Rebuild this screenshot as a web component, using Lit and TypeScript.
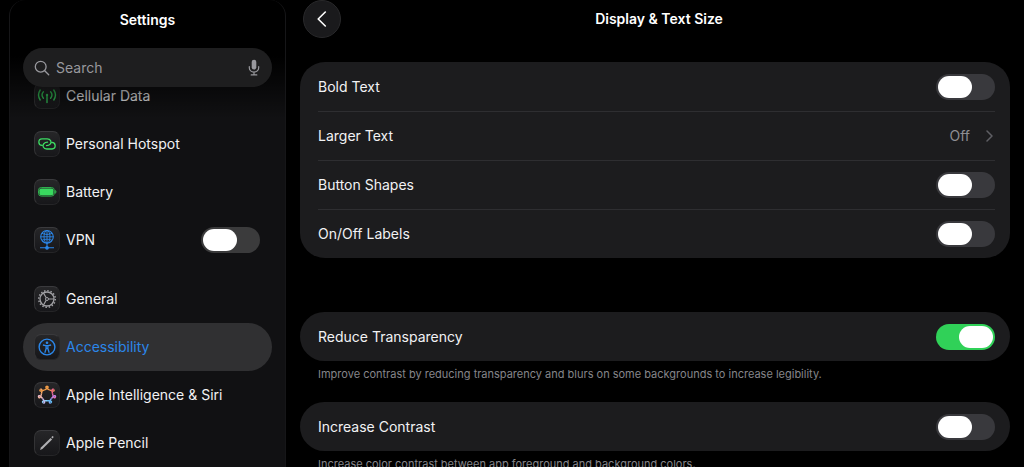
import { LitElement, html, svg, css, nothing } from "lit";
import { customElement, property, state } from "lit/decorators.js";
import { classMap } from "lit/directives/class-map.js";

const RING_COLORS = [
  "#f6a04a", "#f98a5a", "#f4698a", "#ec6fb4", "#c583e6", "#7fa8f5", "#62bdf7",
  "#8fd0f7", "#c3b9ee", "#f0bccb", "#f6b59c", "#f7a866", "#f7a04a", "#f6a04a",
];

/** Seven-lobed looping ring, split in short strokes so that the hue can travel round it. */
function loopRing() {
  const steps = 168;
  const at = (i: number) => {
    const t = (i / steps) * Math.PI * 2;
    const r = 7.2 + 1.5 * Math.cos(7 * t);
    const a = t - 0.33 * Math.sin(7 * t) - Math.PI / 2;
    return [13 + r * Math.cos(a), 13 + r * Math.sin(a)];
  };
  const parts = RING_COLORS.length;
  const size = steps / parts;
  return RING_COLORS.map((color, n) => {
    const points: string[] = [];
    for (let i = n * size; i <= (n + 1) * size; i++) {
      points.push(at(i).map((v) => v.toFixed(2)).join(" "));
    }
    return svg`<path d="M${points.join("L")}" stroke=${color} stroke-width="1.4"/>`;
  });
}

const ICONS: Record<string, unknown> = {
  cellular: svg`<g stroke="#34c759" stroke-width="1.4" stroke-linecap="round">
    <path d="M9.4 8.800a4.900 4.900 0 0 0 0 6.400M16.600 8.800a4.900 4.900 0 0 1 0 6.400M6.200 7a9 9 0 0 0 0 10M19.800 7a9 9 0 0 1 0 10M13 12.500V19.500"/>
    <circle cx="13" cy="12" r="1.200" fill="#34c759" stroke="none"/></g>`,
  hotspot: svg`<g stroke="#3ddc63" stroke-width="1.3" stroke-linecap="round">
    <path d="M8.300 14.400a3.300 3.300 0 0 1-.300-6.600h5.200c3.600 0 4.700 3.400 3 5.300-.8.900-2.200 1.500-3.700 1.500"/>
    <path d="M17.700 11.400a3.300 3.300 0 0 1 .300 6.600h-5.200c-3.600 0-4.700-3.400-3-5.300.8-.900 2.200-1.500 3.700-1.500"/></g>`,
  battery: svg`<rect x="4.500" y="8.500" width="15.800" height="8.600" rx="2.800" stroke="#2fae4d" stroke-width="1"/>
    <rect x="5.400" y="9.400" width="14" height="6.800" rx="1.900" fill="#39d95f"/>
    <path d="M21.300 11.200c1.200.500 1.200 2.700 0 3.200z" fill="#2fae4d" stroke="#2fae4d" stroke-width=".6"/>`,
  vpn: svg`<g stroke="#2b87ea" stroke-width="1.100">
    <circle cx="13" cy="9.800" r="6.300"/><ellipse cx="13" cy="9.800" rx="3" ry="6.300" stroke-width=".9"/>
    <path stroke-width=".9" d="M13 3.500v13M6.700 9.800h12.600M8 6.300c3 1.500 7 1.500 10 0M8 13.300c3-1.500 7-1.500 10 0"/>
    <path d="M13 16v4.800M6 20.800h14"/>
    <circle cx="13" cy="20.800" r="1.300" fill="#2b87ea"/></g>`,
  general: svg`<g stroke="#a0a0a4">
    <circle cx="13" cy="13" r="8.300" stroke-width="1.500" stroke-dasharray="1.500 1.759"/>
    <circle cx="13" cy="13" r="7" stroke-width="1.300"/>
    <circle cx="13" cy="13" r="1.500" stroke-width="1"/>
    <path stroke-width="1.200" d="M14.500 13H20M12.200 11.700 9.500 7M12.200 14.300 9.500 19"/></g>`,
  accessibility: svg`<g stroke="#2b87ea">
    <circle cx="13" cy="13" r="7.900" stroke-width="1.400"/>
    <circle cx="13" cy="8.700" r="1.300" fill="#2b87ea" stroke="none"/>
    <path stroke-width="1.300" stroke-linejoin="round" d="M8.900 11l3 .700h2.200l3-.700M12.100 11.800v3l-1.300 4M13.900 11.800v3l1.300 4M12.200 14.300h1.600"/></g>`,
  siri: loopRing(),
  pencil: svg`<path d="M6 19.900l.900-2.300L16.600 7.900l1.500 1.500-9.700 9.700z" fill="#b0b0b3"/>
    <path d="M17.300 7.200l.900-.900q.600-.400 1.100.100t.100 1.100l-.900.900z" fill="#b0b0b3"/>`,
};

@customElement("settings-switch")
class SettingsSwitch extends LitElement {
  @property({ type: Boolean }) checked = false;
  @property() name = "";

  static styles = css`
    :host { display: block; flex: none; height: 26px; }
    .switch {
      appearance: none; display: flex; align-items: center; box-sizing: border-box;
      width: 59px; height: 26px; margin: 0; padding: 0 2px;
      border-radius: 13px; background: var(--track, #39393d); cursor: pointer;
    }
    .switch::before { content: ""; width: 34px; height: 22px; border-radius: 11px; background: #fff; }
    .switch:checked { justify-content: flex-end; background: #30d158; }
    .switch:focus-visible { outline: 2px solid #2b87ea; outline-offset: 2px; }
  `;

  render() {
    return html`<input class="switch" type="checkbox" role="switch" aria-label=${this.name}
      .checked=${this.checked}
      @change=${(e: Event) => (this.checked = (e.target as HTMLInputElement).checked)} />`;
  }
}

interface Item { id: string; label: string; toggle?: boolean }

const GROUPS: Item[][] = [
  [
    { id: "cellular", label: "Cellular Data" },
    { id: "hotspot", label: "Personal Hotspot" },
    { id: "battery", label: "Battery" },
    { id: "vpn", label: "VPN", toggle: true },
  ],
  [
    { id: "general", label: "General" },
    { id: "accessibility", label: "Accessibility" },
    { id: "siri", label: "Apple Intelligence & Siri" },
    { id: "pencil", label: "Apple Pencil" },
  ],
];

@customElement("settings-sidebar")
class SettingsSidebar extends LitElement {
  @state() private current = "accessibility";

  static styles = css`
    :host {
      display: grid; grid-template-columns: minmax(0, 1fr); overflow: hidden; background: #111113;
      border: 1px solid #161618; border-width: 0 1px; border-radius: 16px 16px 0 0;
    }
    .header, .list { grid-area: 1 / 1; }
    .header {
      z-index: 1; align-self: start; padding: 10px 13px 32px; pointer-events: none;
      background: linear-gradient(#000 56px, #0000);
    }
    .title { margin: 0 0 18px; color: #fff; font-size: 14px; line-height: 20px; font-weight: 600; text-align: center; }
    .search {
      display: flex; align-items: center; gap: 6px; height: 39px; padding: 0 12px 0 11px;
      border-radius: 20px; background: #1e1e1f; color: #98989d; pointer-events: auto;
    }
    .input {
      flex: 1; min-width: 0; padding: 0; border: 0; outline: 0; background: none;
      color: #fff; font: inherit;
    }
    .input::placeholder { color: #98989d; opacity: 1; }
    .mic { display: flex; padding: 0; border: 0; background: none; color: inherit; }
    .list { display: flex; flex-direction: column; gap: 11px; padding: 72px 13px 0; }
    .item {
      display: flex; align-items: center; gap: 6px; height: 48px; padding: 0 12px 0 11px;
      border-radius: 24px; color: #f2f2f4; text-decoration: none; white-space: nowrap;
    }
    .item.current { background: #303032; color: #2b87ea; }
    .name { flex: 1; }
    .tile {
      flex: none; box-sizing: border-box; width: 26px; height: 26px; border-radius: 7px;
      border: 1px solid; border-color: #3a3a3d #262628 #252527 #333335;
      background: linear-gradient(#262628, #17171a);
    }
    .glyph { display: block; width: 26px; height: 26px; margin: -1px; }
    settings-switch { --track: #3b3b3c; }
  `;

  private item(it: Item) {
    const tile = html`<span class="tile"><svg class="glyph" viewBox="0 0 26 26" fill="none" aria-hidden="true">${ICONS[it.id]}</svg></span>
      <span class="name">${it.label}</span>`;
    if (it.toggle) {
      return html`<div class="item">${tile}<settings-switch name=${it.label}></settings-switch></div>`;
    }
    const on = it.id === this.current;
    return html`<a class=${classMap({ item: true, current: on })} href="#${it.id}"
      aria-current=${on ? "page" : nothing} @click=${() => (this.current = it.id)}>${tile}</a>`;
  }

  render() {
    return html`
      <header class="header">
        <h2 class="title">Settings</h2>
        <label class="search">
          <svg width="16" height="16" viewBox="0 0 16 16" fill="none" stroke="currentColor" stroke-width="1.300" stroke-linecap="round" aria-hidden="true">
            <circle cx="6.700" cy="6.700" r="5.400"/><path d="M10.700 10.700l4 4"/></svg>
          <input class="input" type="text" placeholder="Search" aria-label="Search" />
          <button class="mic" aria-label="Dictate">
            <svg width="12" height="17" viewBox="0 0 12 17" fill="none" stroke="currentColor" stroke-width="1.200" stroke-linecap="round" aria-hidden="true">
              <rect x="3.700" y=".800" width="4.600" height="9.800" rx="2.300" fill="currentColor" stroke="none"/>
              <path d="M1.300 7.500v1.300a4.700 4.300 0 0 0 9.400 0V7.500M6 13.200v2.500M3.200 15.900h5.600"/></svg>
          </button>
        </label>
      </header>
      <nav class="list">${GROUPS.map((g) => html`<div>${g.map((it) => this.item(it))}</div>`)}</nav>`;
  }
}

@customElement("app-root")
class AppRoot extends LitElement {
  static styles = css`
    :host {
      display: grid; grid-template-columns: minmax(0, 277px) minmax(0, 1fr); gap: 14px;
      box-sizing: border-box; height: 100vh; overflow: hidden; padding: 0 14px 0 9px;
      background: #000; color: #f2f2f4; font: 14px/20px Inter, "Liberation Sans", sans-serif;
    }
    .bar { display: grid; grid-template-columns: 38px 1fr 30px; align-items: center; padding: 0 3px 24px; }
    .back {
      display: grid; place-items: center; width: 38px; height: 38px; padding: 0;
      border: 1px solid #29292b; border-radius: 50%; background: #1a1a1c; color: #fff;
    }
    .title { margin: 0; font-size: 14px; line-height: 20px; font-weight: 600; text-align: center; color: #fff; }
    .card { padding: 0 15px 0 18px; border-radius: 25px; background: #1c1c1e; }
    .card.first { margin-bottom: 54px; }
    .row {
      display: flex; align-items: center; justify-content: space-between; box-sizing: border-box;
      height: 49px; color: inherit; text-decoration: none;
    }
    .row + .row { border-top: 1px solid #2e2e31; }
    .value { display: flex; align-items: center; gap: 16px; padding-right: 2px; color: #8e8e93; }
    .chevron { color: #5f5f64; }
    .note { margin: 5px 18px 19px; font-size: 11px; line-height: 17px; color: #85858a; }
  `;

  private toggle(name: string, on = false) {
    return html`<div class="row"><span>${name}</span><settings-switch name=${name} ?checked=${on}></settings-switch></div>`;
  }

  render() {
    return html`
      <settings-sidebar></settings-sidebar>
      <main>
        <header class="bar">
          <button class="back" aria-label="Back">
            <svg width="10" height="16" viewBox="0 0 10 16" fill="none" stroke="currentColor" stroke-width="1.600" stroke-linecap="round" stroke-linejoin="round" aria-hidden="true"><path d="M8.300 1 1.200 8l7.100 7"/></svg>
          </button>
          <h1 class="title">Display &amp; Text Size</h1>
        </header>
        <section class="card first">
          ${this.toggle("Bold Text")}
          <a class="row" href="#larger-text"><span>Larger Text</span>
            <span class="value">Off
              <svg class="chevron" width="7" height="12" viewBox="0 0 7 12" fill="none" stroke="currentColor" stroke-width="1.500" stroke-linecap="round" stroke-linejoin="round" aria-hidden="true"><path d="M1 1l5 5-5 5"/></svg>
            </span></a>
          ${this.toggle("Button Shapes")}
          ${this.toggle("On/Off Labels")}
        </section>
        <section class="card">${this.toggle("Reduce Transparency", true)}</section>
        <p class="note">Improve contrast by reducing transparency and blurs on some backgrounds to increase legibility.</p>
        <section class="card">${this.toggle("Increase Contrast")}</section>
        <p class="note">Increase color contrast between app foreground and background colors.</p>
      </main>`;
  }
}
